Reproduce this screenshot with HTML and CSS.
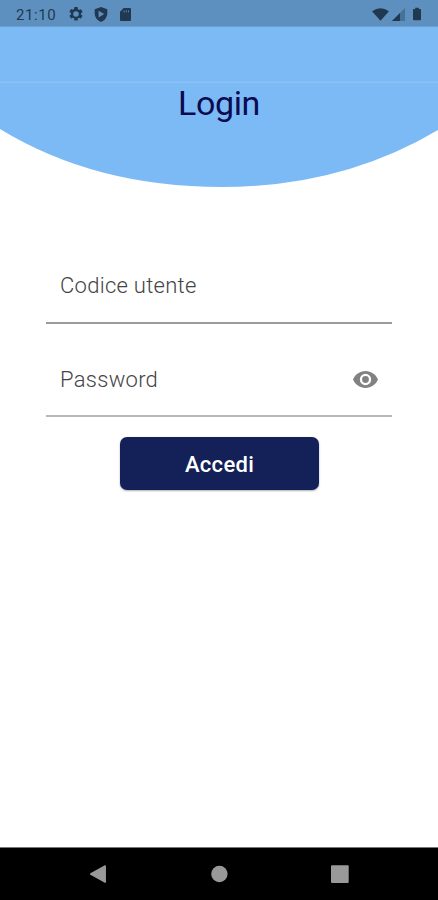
FILE: index.html
```html
<!DOCTYPE html>
<html lang="it">
<head>
<meta charset="utf-8">
<meta name="viewport" content="width=device-width, initial-scale=1">
<title>Login</title>
<link rel="stylesheet" href="styles.css">
</head>
<body>
<div class="screen">
  <header class="hero">
    <svg class="hero-shape" viewBox="0 0 438 188" aria-hidden="true">
      <path fill="#7cbaf6" d="M0 0H438V130Q342 187 222 187Q95 187 0 129Z"/>
      <path fill="#8dc2f8" d="M0 81.5H438V83H0Z"/>
    </svg>
    <div class="status">
      <span class="clock">21:10</span>
      <svg class="status-icon gear" viewBox="2 2 20 20"><path d="M19.14 12.94c.04-.3.06-.61.06-.94s-.02-.64-.07-.94l2.03-1.58a.5.5 0 0 0 .12-.61l-1.92-3.32a.49.49 0 0 0-.59-.22l-2.39.96a7 7 0 0 0-1.62-.94l-.36-2.54A.48.48 0 0 0 13.92 2h-3.84a.48.48 0 0 0-.48.41l-.36 2.54a7 7 0 0 0-1.62.94l-2.39-.96a.48.48 0 0 0-.59.22L2.72 8.47a.47.47 0 0 0 .12.61l2.03 1.58a6 6 0 0 0 0 1.88l-2.03 1.58a.5.5 0 0 0-.12.61l1.92 3.32c.12.22.37.29.59.22l2.39-.96c.5.38 1.03.7 1.62.94l.36 2.54c.05.24.24.41.48.41h3.84c.24 0 .44-.17.48-.41l.36-2.54a7 7 0 0 0 1.62-.94l2.39.96c.22.08.47 0 .59-.22l1.92-3.32a.47.47 0 0 0-.12-.61zM12 16a4 4 0 1 1 0-8 4 4 0 0 1 0 8z"/></svg>
      <svg class="status-icon shield" viewBox="0 0 14 15"><path fill-rule="evenodd" d="M7 0L13.3 2.3V7Q13 12 7 15Q1 12 .7 7V2.3ZM4.6 3.8V10.5L10.2 7.1Z"/></svg>
      <svg class="status-icon card" viewBox="0 0 12 14"><path fill-rule="evenodd" d="M4 0H11Q12 0 12 1V13Q12 14 11 14H1Q0 14 0 13V4ZM4 2.5V4.5H5V2.5ZM6.4 2.5V4.5H7.4V2.5ZM8.8 2.5V4.5H9.8V2.5Z"/></svg>
      <span class="spacer"></span>
      <svg class="status-icon wifi" viewBox="0 0 18 13"><path d="M0 3Q9-3 18 3L9 13Z"/></svg>
      <svg class="status-icon signal" viewBox="0 0 13 13"><path opacity=".35" d="M13 0V13H0Z"/><path d="M8 5V13H0Z"/></svg>
      <svg class="status-icon battery" viewBox="0 0 9 14"><path d="M2.5 0H6.5V1.5H8Q9 1.5 9 2.5V13Q9 14 8 14H1Q0 14 0 13V2.5Q0 1.5 1 1.5H2.5Z"/></svg>
    </div>
    <h1 class="title">Login</h1>
  </header>
  <main class="form">
    <div class="field user"><span class="label">Codice utente</span></div>
    <div class="field password">
      <span class="label">Password</span>
      <svg class="eye" viewBox="1 4.5 22 15"><path d="M12 4.5C7 4.5 2.73 7.61 1 12c1.73 4.39 6 7.5 11 7.5s9.27-3.11 11-7.5c-1.73-4.39-6-7.5-11-7.5zM12 17a5 5 0 1 1 0-10 5 5 0 0 1 0 10zm0-8a3 3 0 1 0 0 6 3 3 0 0 0 0-6z"/></svg>
    </div>
    <button class="submit" type="button"><span class="submit-text">Accedi</span></button>
  </main>
  <nav class="navbar">
    <svg class="nav-icons" viewBox="0 0 438 52"><path stroke="#999" stroke-width="1.5" stroke-linejoin="round" d="M90.7 26L105.2 18V34.2Z"/><circle cx="219.4" cy="26" r="8.2"/><rect x="331" y="17.3" width="17.7" height="17.7" rx="1"/></svg>
  </nav>
</div>
</body>
</html>
```
FILE: styles.css
```css
* { box-sizing: border-box; }
body { margin: 0; background: #fff; font-family: Roboto, "Liberation Sans", sans-serif; }
.screen { width: 438px; height: 900px; display: flex; flex-direction: column; overflow: hidden; background: #fff; }
.hero { position: relative; height: 188px; flex: none; }
.hero-shape { position: absolute; inset: 0; width: 438px; height: 188px; }
.status { position: relative; height: 27px; padding: 2px 16px 0; display: flex; align-items: center; background: #5e90bf; color: #203950; border-bottom: 1px solid #6a9fd0; }
.clock { width: 53px; font-size: 15px; letter-spacing: .6px; line-height: 24px; padding-top: 1px; }
.status-icon { fill: #203950; flex: none; display: block; }
.gear { width: 14px; height: 14px; }
.shield { width: 14px; height: 15px; margin-left: 11px; }
.card { width: 11px; height: 13px; margin-left: 12px; }
.spacer { flex: 1; }
.wifi { width: 17px; height: 13px; }
.signal { width: 13px; height: 13px; margin-left: 3px; }
.battery { width: 8px; height: 14px; margin: 0 1px 0 8px; }
.title { position: relative; margin: 55px 0 0; text-align: center; font-size: 34px; line-height: 42px; font-weight: 400; color: #0b0b52; letter-spacing: -.4px; }
.form { flex: 1; padding: 60px 46px 0; display: flex; flex-direction: column; }
.field { display: flex; justify-content: space-between; padding: 0 14px; border-bottom: 2px solid #9b9b9b; }
.user { height: 76px; padding-top: 23px; }
.password { height: 93px; padding-top: 41px; border-color: #b8b8b8; }
.label { font-size: 22px; line-height: 30px; color: #444; font-weight: 300; letter-spacing: .28px; white-space: nowrap; }
.eye { width: 25px; height: 17px; margin-top: 6px; fill: #828282; }
.submit { width: 199px; height: 53px; margin: 20px auto 0 74px; padding: 0; border: 0; border-radius: 7px; background: #142158; box-shadow: 0 1px 2px #7779; color: #fff; font: 500 22px/54px Roboto, sans-serif; letter-spacing: .3px; }
.submit-text { display: block; padding-top: 1px; }
.navbar { height: 53px; background: #000; border-top: 1px solid #777; }
.nav-icons { display: block; width: 438px; height: 52px; fill: #999; }
```
